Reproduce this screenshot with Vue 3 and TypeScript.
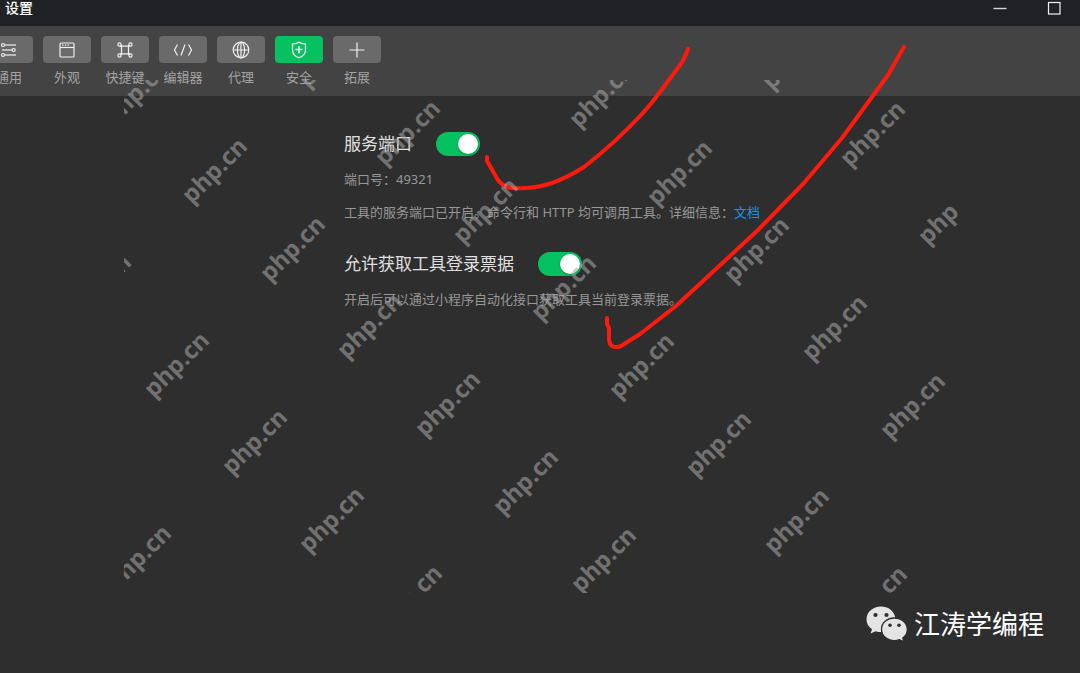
<script setup lang="ts">
import { ref } from 'vue'

interface Tab {
  id: string
  label: string
}

const tabs: Tab[] = [
  { id: 'general', label: '通用' },
  { id: 'look', label: '外观' },
  { id: 'keys', label: '快捷键' },
  { id: 'editor', label: '编辑器' },
  { id: 'proxy', label: '代理' },
  { id: 'security', label: '安全' },
  { id: 'extend', label: '拓展' },
]

const active = ref('security')
const portOpen = ref(true)
const ticketOpen = ref(true)

// Diagonal lattice of watermark centres.
const marks: { x: number; y: number }[] = []
for (let j = -4; j <= 3; j++) {
  for (let i = -3; i <= 12; i++) {
    const x = Math.round(216 + 77.7 * i - 38 * j)
    const y = Math.round(172 + 77.7 * i + 193.5 * j)
    if (x > 80 && x < 1000 && y > 40 && y < 625) marks.push({ x, y })
  }
}
</script>

<template>
  <div class="window">
    <header class="titlebar">
      <h1 class="title">设置</h1>
      <div class="controls">
        <button type="button" class="ctl" aria-label="最小化">
          <svg width="14" height="14" viewBox="0 0 14 14"><path d="M0.5 7.5H13.5" stroke="#d8d8d8" stroke-width="1.4" /></svg>
        </button>
        <button type="button" class="ctl" aria-label="最大化">
          <svg width="14" height="14" viewBox="0 0 14 14"><rect x="1.5" y="1.5" width="11.5" height="11.5" fill="none" stroke="#f2f2f2" stroke-width="1.2" /></svg>
        </button>
      </div>
    </header>

    <nav class="toolbar">
      <button
        v-for="tab in tabs"
        :key="tab.id"
        type="button"
        class="tab"
        :class="{ active: tab.id === active }"
        @click="active = tab.id"
      >
        <span class="tile">
          <svg class="icon" width="20" height="20" viewBox="0 0 20 20">
            <g v-if="tab.id === 'general'">
              <circle cx="4" cy="5" r="1.5" /><path d="M5.5 5H17" />
              <path d="M3 10H13" /><circle cx="14.7" cy="10" r="1.5" />
              <circle cx="4" cy="15" r="1.5" /><path d="M5.5 15H17" />
            </g>
            <g v-else-if="tab.id === 'look'">
              <rect x="3" y="3" width="14" height="14" rx="1" />
              <path d="M3 7.5H17" /><path d="M5 5.2H6.5M7.8 5.2H9.3M10.6 5.2H12.1" />
            </g>
            <g v-else-if="tab.id === 'keys'">
              <path d="M6.5 5V15M13.5 5V15M5 6.2H15M5 13.8H15" />
              <circle cx="4.5" cy="4.5" r="1.6" /><circle cx="15.5" cy="4.5" r="1.6" />
              <circle cx="4.5" cy="15.5" r="1.6" /><circle cx="15.5" cy="15.5" r="1.6" />
            </g>
            <g v-else-if="tab.id === 'editor'">
              <path d="M4.5 4.5L1.5 10L4.5 15.5M15.5 4.5L18.5 10L15.5 15.5M12 4.5L8 15.5" />
            </g>
            <g v-else-if="tab.id === 'proxy'">
              <circle cx="10" cy="10" r="7.8" />
              <ellipse cx="10" cy="10" rx="3.6" ry="7.8" />
              <path d="M2.2 10H17.8M10 2.2V17.8" />
            </g>
            <g v-else-if="tab.id === 'security'">
              <path d="M10 2.2C12 3.4 14.3 4 16.5 4V10C16.5 14 14 16.4 10 17.8C6 16.4 3.5 14 3.5 10V4C5.7 4 8 3.4 10 2.2Z" />
              <path d="M6.5 9.5H13.5M10 6V13.2" stroke-width="1.5" />
            </g>
            <path v-else d="M2.5 10H17.5M10 2.5V17.5" />
          </svg>
        </span>
        <span class="label">{{ tab.label }}</span>
      </button>
    </nav>

    <main class="content">
      <section>
        <div class="row">
          <label for="port-switch" class="name">服务端口</label>
          <input id="port-switch" v-model="portOpen" type="checkbox" class="switch" />
        </div>
        <p class="note">端口号：49321</p>
        <p class="note">
          工具的服务端口已开启。命令行和 HTTP 均可调用工具。详细信息：<a href="#" class="link">文档</a>
        </p>
      </section>
      <section>
        <div class="row">
          <label for="ticket-switch" class="name">允许获取工具登录票据</label>
          <input id="ticket-switch" v-model="ticketOpen" type="checkbox" class="switch" />
        </div>
        <p class="note">开启后可以通过小程序自动化接口获取工具当前登录票据。</p>
      </section>
    </main>

    <svg class="overlay" width="1080" height="673" viewBox="0 0 1080 673" aria-hidden="true">
      <defs>
        <clipPath id="mark-area"><rect x="124" y="80" width="834" height="513" /></clipPath>
      </defs>
      <g fill="none" stroke="#ff1a0e" stroke-width="4" stroke-linecap="round" stroke-linejoin="round">
        <path d="M487 157V161L498 180Q503 187 512 188C540 190 562 181 584 167Q615 143 642 114Q652 103 660 92L680 65Q684 60 688 49" />
        <path d="M607 318V324L609 328V339Q610 350 621 346L640 334L676 306L758 230L803 184L842 138L888 75L904 47" />
      </g>
      <g clip-path="url(#mark-area)" class="marks">
        <text
          v-for="m in marks"
          :key="`${m.x}-${m.y}`"
          :transform="`translate(${m.x} ${m.y}) rotate(-45)`"
          text-anchor="middle"
          y="6"
        >php.cn</text>
      </g>
    </svg>

    <footer class="brand">
      <svg width="42" height="36" viewBox="0 0 42 36" aria-hidden="true">
        <path fill="#e4e4e4" d="M15 0.5C6.8 0.5 0.5 6 0.5 13.3C0.5 17.5 2.5 21 6 23.3L4.6 27.6L9.6 25.2C12.5 26.2 16 26.3 19 25.7C29 24 30 14 29 10.5C27.5 4.5 22 0.5 15 0.5Z" />
        <path fill="#e4e4e4" stroke="#2e2e2e" stroke-width="1.3" d="M28.3 12C21 12 15.5 17 15.5 23.3C15.5 29.7 21 34.6 28.3 34.6C30 34.6 31.8 34.3 33.4 33.7L38 35.8L36.8 32C39.6 30 41.3 27 41.3 23.5C41.3 17 35.5 12 28.3 12Z" />
        <g fill="#2e2e2e">
          <circle cx="9.5" cy="9" r="2.1" /><circle cx="20.5" cy="9" r="2.1" />
          <circle cx="24" cy="19.3" r="1.8" /><circle cx="33" cy="19.3" r="1.8" />
        </g>
      </svg>
      <span>江涛学编程</span>
    </footer>
  </div>
</template>

<style>
body {
  margin: 0;
  background: #2e2e2e;
}
</style>

<style scoped>
.window {
  position: relative;
  display: flex;
  flex-direction: column;
  box-sizing: border-box;
  min-height: 100vh;
  overflow: hidden;
  background: #2e2e2e;
  color: #e6e6e6;
  font-family: "Noto Sans", "Noto Sans CJK SC", sans-serif;
}
.titlebar {
  display: flex;
  justify-content: space-between;
  height: 26px;
  background: #202124;
}
.title {
  margin: 0;
  padding-left: 5px;
  font-size: 14px;
  font-weight: 500;
  line-height: 15px;
  color: #fff;
}
.controls {
  display: flex;
  align-items: flex-start;
  gap: 40px;
  padding: 1px 19px 0 0;
}
.ctl {
  display: block;
  padding: 0;
  border: 0;
  background: none;
}
.ctl svg {
  display: block;
}
.toolbar {
  display: flex;
  gap: 10px;
  box-sizing: border-box;
  height: 70px;
  padding-top: 10px;
  margin-left: -15px;
  background: #434343;
}
.tab {
  display: flex;
  flex-direction: column;
  align-items: center;
  flex: none;
  gap: 4px;
  width: 48px;
  padding: 0;
  border: 0;
  background: none;
  font-family: inherit;
}
.tile {
  display: flex;
  align-items: center;
  justify-content: center;
  width: 48px;
  height: 27px;
  border-radius: 4px;
  background: #6a6a6a;
}
.active .tile {
  background: #07c160;
}
.icon {
  fill: none;
  stroke: #f0f0f0;
  stroke-width: 1.2;
}
.label {
  font-size: 13px;
  line-height: 20px;
  white-space: nowrap;
  color: #a3a3a3;
}
.content {
  display: flex;
  flex-direction: column;
  flex: 1;
  gap: 30px;
  padding: 36px 24px 0 344px;
}
.row {
  display: flex;
  align-items: center;
  gap: 24px;
  height: 24px;
}
.name {
  font-size: 17px;
  line-height: 24px;
  color: #e0e0e0;
}
.switch {
  appearance: none;
  box-sizing: border-box;
  width: 44px;
  height: 24px;
  margin: 0;
  padding: 2px;
  border-radius: 12px;
  background: #6a6a6a;
}
.switch::before {
  content: "";
  display: block;
  width: 20px;
  height: 20px;
  border-radius: 50%;
  background: #fff;
  box-shadow: 0 1px 2px rgba(0, 0, 0, 0.3);
}
.switch:checked {
  background: #07c160;
}
.switch:checked::before {
  margin-left: auto;
}
.note {
  margin: 13px 0 0;
  font-size: 13px;
  line-height: 20px;
  color: #979797;
}
.link {
  color: #1296f0;
  text-decoration: none;
}
.overlay {
  position: absolute;
  top: 0;
  left: 0;
  pointer-events: none;
}
.marks {
  fill: #a6a6a6;
  fill-opacity: 0.56;
  font-family: "Noto Sans", sans-serif;
  font-size: 24px;
  font-weight: 700;
}
.brand {
  display: flex;
  align-items: center;
  justify-content: flex-end;
  gap: 6px;
  padding: 0 36px 30px 0;
  font-size: 26px;
  line-height: 38px;
  color: #fff;
}
</style>
